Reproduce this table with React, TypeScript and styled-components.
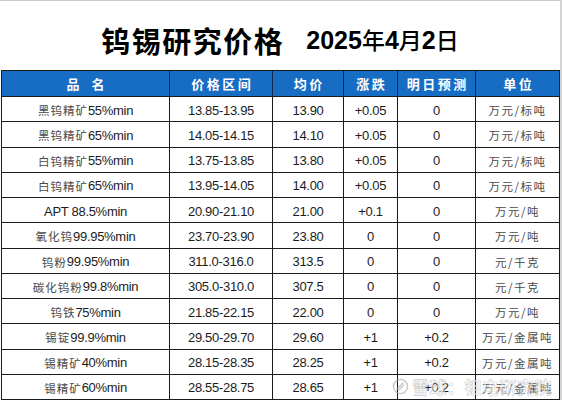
import React from "react";
import styled, { createGlobalStyle } from "styled-components";

const Global = createGlobalStyle`
  html, body { margin: 0; padding: 0; background: #ffffff; }
  body { font-family: "Liberation Sans", Arial, "Noto Sans CJK SC", sans-serif; }
`;

const Page = styled.div`
  position: relative;
  width: 562px;
  height: 400px;
  box-sizing: border-box;
  border-top: 1px solid #c9c9c9;
  border-right: 2px solid #d4d4d4;
  background: #fff;
  overflow: hidden;
`;

const TitleBar = styled.div`
  height: 69px;
  display: flex;
  align-items: center;
  justify-content: center;
  gap: 22px;
  padding-top: 9px;
  box-sizing: border-box;
  color: #000;
`;

const TitleCn = styled.span`
  font-family: "Noto Sans CJK SC", sans-serif;
  font-weight: 700;
  font-size: 29px;
  letter-spacing: 1.5px;
  line-height: 1;
`;

const DateText = styled.span`
  font-family: "Liberation Sans Narrow", "Liberation Sans", sans-serif;
  font-weight: 700;
  font-size: 25px;
  line-height: 1;
  display: flex;
  align-items: baseline;
`;

const DateCn = styled.span`
  font-family: "Noto Sans CJK SC", sans-serif;
  font-weight: 500;
  font-size: 23px;
`;

const Table = styled.div`
  margin-left: 1px;
  width: 559px;
  height: 330px;
  box-sizing: border-box;
  display: grid;
  grid-template-columns: 168px 103px 71px 54px 78px 84px;
  grid-template-rows: 26px repeat(12, 1fr);
  border-left: 1px solid #1b1b1b;
  border-top: 1px solid #1b1b1b;
`;

const HeadCell = styled.div<{ $ls?: number }>`
  background: #166dc3;
  color: #ffffff;
  border-right: 1px solid #0f2a4a;
  border-bottom: 1px solid #1b1b1b;
  display: flex;
  align-items: center;
  justify-content: center;
  font-family: "Noto Sans CJK SC", sans-serif;
  font-weight: 700;
  font-size: 13px;
  letter-spacing: ${(p) => p.$ls ?? 2.5}px;
  padding-left: ${(p) => p.$ls ?? 2.5}px;
  box-sizing: border-box;
`;

const Cell = styled.div`
  border-right: 1px solid #1b1b1b;
  border-bottom: 1px solid #1b1b1b;
  display: flex;
  align-items: center;
  justify-content: center;
  padding-top: 2px;
  box-sizing: border-box;
  font-family: "Liberation Sans", Arial, sans-serif;
  font-size: 13px;
  letter-spacing: -0.3px;
  color: #1c1c1c;
  white-space: nowrap;
`;

const Cn = styled.span<{ $ls?: number }>`
  font-family: "Noto Sans CJK SC", sans-serif;
  font-size: 11.5px;
  font-weight: 400;
  color: #4a4a4a;
  letter-spacing: ${(p) => p.$ls ?? 1}px;
`;

const Watermark = styled.div`
  position: absolute;
  left: 392px;
  top: 373px;
  display: flex;
  align-items: center;
  gap: 3px;
  font-family: "Noto Sans CJK SC", sans-serif;
  font-size: 17px;
  font-weight: 700;
  color: rgba(255, 255, 255, 0.55);
  -webkit-text-stroke: 0.6px rgba(150, 150, 150, 0.5);
  letter-spacing: 0.5px;
  pointer-events: none;
  white-space: nowrap;
`;

type Row = {
  cn: string;
  spec: string;
  range: string;
  avg: string;
  chg: string;
  fc: string;
  unit: string;
};

const rows: Row[] = [
  { cn: "黑钨精矿", spec: "55%min", range: "13.85-13.95", avg: "13.90", chg: "+0.05", fc: "0", unit: "万元/标吨" },
  { cn: "黑钨精矿", spec: "65%min", range: "14.05-14.15", avg: "14.10", chg: "+0.05", fc: "0", unit: "万元/标吨" },
  { cn: "白钨精矿", spec: "55%min", range: "13.75-13.85", avg: "13.80", chg: "+0.05", fc: "0", unit: "万元/标吨" },
  { cn: "白钨精矿", spec: "65%min", range: "13.95-14.05", avg: "14.00", chg: "+0.05", fc: "0", unit: "万元/标吨" },
  { cn: "", spec: "APT 88.5%min", range: "20.90-21.10", avg: "21.00", chg: "+0.1", fc: "0", unit: "万元/吨" },
  { cn: "氧化钨", spec: "99.95%min", range: "23.70-23.90", avg: "23.80", chg: "0", fc: "0", unit: "万元/吨" },
  { cn: "钨粉", spec: "99.95%min", range: "311.0-316.0", avg: "313.5", chg: "0", fc: "0", unit: "元/千克" },
  { cn: "碳化钨粉", spec: "99.8%min", range: "305.0-310.0", avg: "307.5", chg: "0", fc: "0", unit: "元/千克" },
  { cn: "钨铁", spec: "75%min", range: "21.85-22.15", avg: "22.00", chg: "0", fc: "0", unit: "万元/吨" },
  { cn: "锡锭", spec: "99.9%min", range: "29.50-29.70", avg: "29.60", chg: "+1", fc: "+0.2", unit: "万元/金属吨" },
  { cn: "锡精矿", spec: "40%min", range: "28.15-28.35", avg: "28.25", chg: "+1", fc: "+0.2", unit: "万元/金属吨" },
  { cn: "锡精矿", spec: "60%min", range: "28.55-28.75", avg: "28.65", chg: "+1", fc: "+0.2", unit: "万元/金属吨" },
];

const headers: { label: string; ls?: number }[] = [
  { label: "品名", ls: 12 },
  { label: "价格区间" },
  { label: "均价" },
  { label: "涨跌" },
  { label: "明日预测" },
  { label: "单位" },
];

export default function App() {
  return (
    <>
      <Global />
      <Page>
        <TitleBar>
          <TitleCn>钨锡研究价格</TitleCn>
          <DateText>
            2025<DateCn>年</DateCn>4<DateCn>月</DateCn>2<DateCn>日</DateCn>
          </DateText>
        </TitleBar>
        <Table>
          {headers.map((h) => (
            <HeadCell key={h.label} $ls={h.ls}>
              {h.label}
            </HeadCell>
          ))}
          {rows.map((r, i) => (
            <React.Fragment key={i}>
              <Cell>
                {r.cn && <Cn>{r.cn}</Cn>}
                {r.spec}
              </Cell>
              <Cell>{r.range}</Cell>
              <Cell>{r.avg}</Cell>
              <Cell>{r.chg}</Cell>
              <Cell>{r.fc}</Cell>
              <Cell>
                <Cn $ls={1.5}>{r.unit}</Cn>
              </Cell>
            </React.Fragment>
          ))}
        </Table>
        <Watermark>
          <svg width="17" height="17" viewBox="0 0 18 18" fill="none">
            <circle cx="9" cy="9" r="7.5" stroke="rgba(160,160,160,0.6)" strokeWidth="1.4" />
            <path d="M5 12 L12 5 M7 13 L13 7" stroke="rgba(160,160,160,0.6)" strokeWidth="1.4" />
          </svg>
          雪球：钽电研究院
        </Watermark>
      </Page>
    </>
  );
}
